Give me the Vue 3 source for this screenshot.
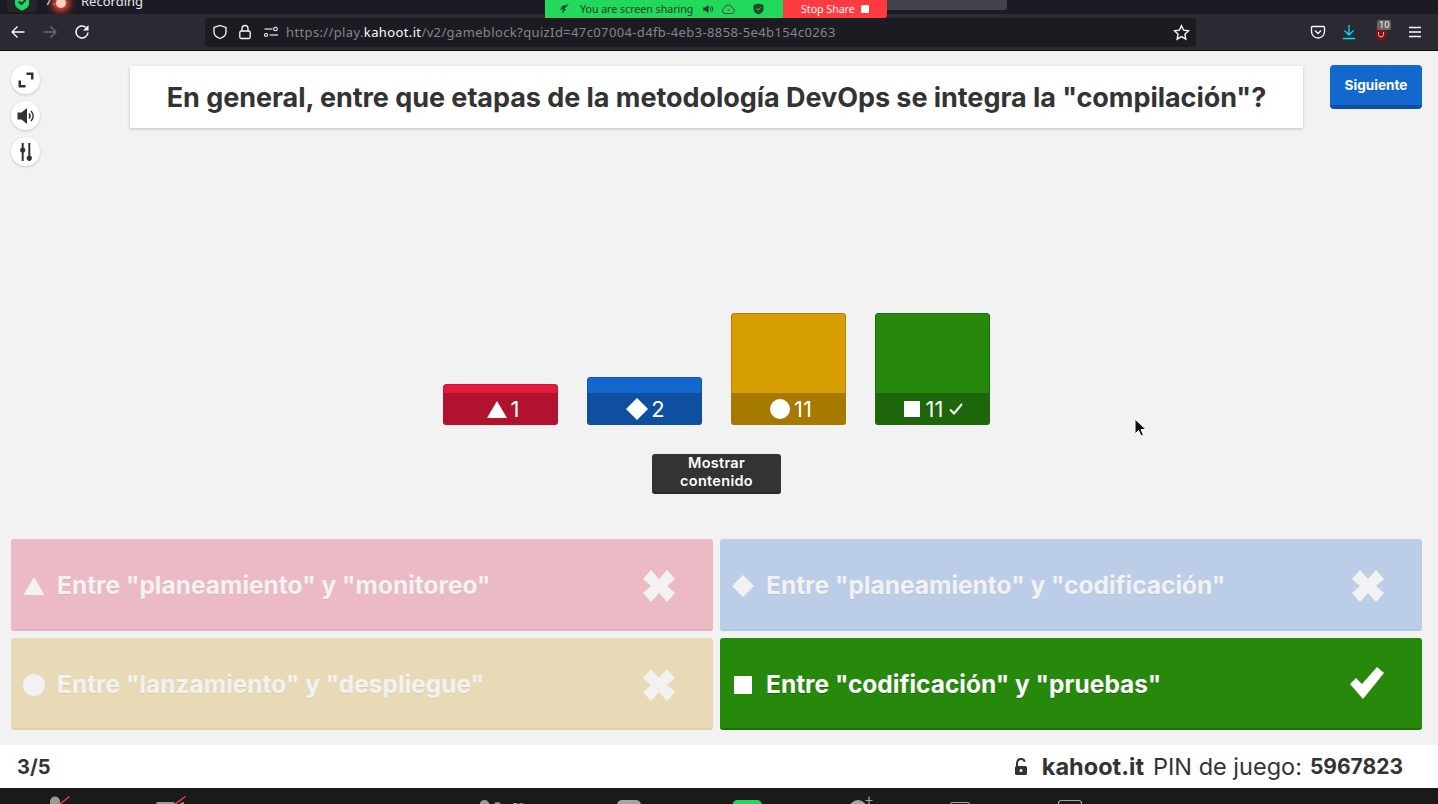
<template>
  <div class="screen">
    <div class="os-bar">
      <span class="os-badge">
        <svg width="16" height="14" viewBox="0 0 16 14"><path d="M8 -4l7 2.500v5c0 3.500-3 5.500-7 7-4-1.500-7-3.500-7-7v-5z" fill="#22d95c"/><path d="M4.800 1.500l2.600 2.600L11.500 0" fill="none" stroke="#123" stroke-width="1.800"/></svg>
      </span>
      <span class="os-num">7:</span>
      <span class="rec-dot"></span>
      <span class="rec-text">Recording</span>
    </div>

    <div class="toolbar">
      <div class="nav">
        <svg width="16" height="16" viewBox="0 0 16 16" class="ic"><path d="M14.500 8H2M7.500 2.500L2 8l5.500 5.500"/></svg>
        <svg width="16" height="16" viewBox="0 0 16 16" class="ic dim"><path d="M1.500 8H14M8.500 2.500L14 8l-5.500 5.500"/></svg>
        <svg width="16" height="16" viewBox="0 0 16 16" class="ic reload"><path d="M14 8.500a6 6 0 1 1-2.200-5.200"/><path d="M14.500 1v5.500H9z" fill="#fbfbfe" stroke="none"/></svg>
      </div>
      <div class="urlbar">
        <svg width="16" height="16" viewBox="0 0 16 16" class="ic"><path d="M8 1.500l6 2v4.500c0 3.500-3 5.500-6 6.500-3-1-6-3-6-6.500V3.500z"/></svg>
        <svg width="14" height="16" viewBox="0 0 14 16" class="ic lock-ic"><rect x="1.800" y="7" width="10.400" height="7.500" rx="1.500"/><path d="M4 7V4.500a3 3 0 0 1 6 0V7"/></svg>
        <svg width="16" height="16" viewBox="0 0 16 16" class="ic perm-ic"><path d="M1.500 5h8M1 11h0"/><circle cx="12.500" cy="5" r="1.800"/><circle cx="3" cy="11" r="1.500"/><path d="M6.500 11H15"/></svg>
        <span class="url"><span>https://play.</span><b>kahoot.it</b><span>/v2/gameblock?quizId=47c07004-d4fb-4eb3-8858-5e4b154c0263</span></span>
        <svg width="17" height="17" viewBox="0 0 16 16" class="ic star"><path d="M8 1.600l2 4.200 4.600.6-3.400 3.200.9 4.600L8 11.900l-4.100 2.300.9-4.600L1.400 6.400 6 5.800z"/></svg>
      </div>
      <div class="tools">
        <svg width="16" height="16" viewBox="0 0 16 16" class="ic"><path d="M2.500 2.500h11a1 1 0 0 1 1 1v4a6.500 6.500 0 0 1-13 0v-4a1 1 0 0 1 1-1z"/><path d="M5 6.500L8 9.500l3-3"/></svg>
        <svg width="16" height="16" viewBox="0 0 16 16" class="ic dl"><path d="M8 1v9.500M3.500 6.500L8 11l4.500-4.500M2 14.500h12"/></svg>
        <span class="ublock">
          <svg width="14" height="15" viewBox="0 0 14 15"><path d="M7 1l6 1.500v5c0 3.500-3 6-6 7-3-1-6-3.500-6-7v-5z" fill="#7c1414"/><path d="M4.500 6v2.500a2.500 2.500 0 0 0 5 0V6" fill="none" stroke="#e8b4b4"/></svg>
          <span class="ublock-count">10</span>
        </span>
        <svg width="16" height="16" viewBox="0 0 16 16" class="ic burger"><path d="M2 3.500h12M2 8h12M2 12.500h12"/></svg>
      </div>
    </div>

    <div class="share-pill">
      <div class="share-green">
        <svg width="12" height="12" viewBox="0 0 12 12"><path d="M11 1L4 3 2 7l3-1-1 5 4-5-2 0z" fill="#164a26"/></svg>
        <span class="share-text">You are screen sharing</span>
        <svg width="12" height="12" viewBox="0 0 12 12"><path d="M1 4.500h2L6.500 2v8L3 7.500H1z" fill="#2b3a2e"/><path d="M8 4c1 1 1 3 0 4M9.500 3c1.500 1.500 1.500 4.500 0 6" fill="none" stroke="#2b3a2e"/></svg>
        <svg class="share-cloud" width="15" height="12" viewBox="0 0 15 12"><path d="M4 10.500a2.800 2.800 0 0 1-.5-5.500 4 4 0 0 1 7.800 0 2.800 2.800 0 0 1-.3 5.500z" fill="none" stroke="#1f5a31"/><circle cx="7.500" cy="7" r="1" fill="#c33"/></svg>
        <svg class="share-shield" width="11" height="12" viewBox="0 0 11 12"><path d="M5.500.5l5 1.500v4c0 3-2.500 4.500-5 5.500-2.500-1-5-2.500-5-5.500V2z" fill="#1e4a2a"/><path d="M3.300 5.500L5 7.200l2.800-2.900" fill="none" stroke="#22d95c"/></svg>
      </div>
      <div class="share-red">
        <span>Stop Share</span>
        <i></i>
      </div>
    </div>
    <div class="ghost-tab"></div>

    <main class="page">
      <header class="top">
        <div class="side">
          <button class="round">
            <svg width="18" height="18" viewBox="0 0 18 18"><path d="M9.500 1.500h7v7H14V4H9.500zM8.500 16.500h-7v-7H4V14h4.500z" fill="#333"/></svg>
          </button>
          <button class="round">
            <svg width="20" height="18" viewBox="0 0 20 18"><path d="M1.500 5.500h4L11 1v16l-5.500-4.500h-4z" fill="#333"/><path d="M13 6.500c1.300 1.500 1.300 3.500 0 5M15 4c2.800 3 2.800 7 0 10" fill="none" stroke="#333" stroke-width="1.600"/></svg>
          </button>
          <button class="round">
            <svg width="18" height="20" viewBox="0 0 18 20"><path d="M5.700 1v18M12.300 1v18" stroke="#333" stroke-width="2"/><circle cx="5.700" cy="8" r="2.600" fill="#333"/><circle cx="12.300" cy="16" r="2.600" fill="#333"/></svg>
          </button>
        </div>
        <h1 class="question">En general, entre que etapas de la metodología DevOps se integra la "compilación"?</h1>
        <button class="next">Siguiente</button>
      </header>

      <section class="chart">
        <div v-for="b in bars" :key="b.cls" class="bar" :class="b.cls">
          <div class="bar-fill" :style="{ height: b.fill + 'px' }"></div>
          <div class="bar-label">
            <svg width="22" height="22" viewBox="0 0 22 22" class="shape-svg"><path :d="b.shape" fill="#fff"/></svg>
            <span>{{ b.value }}</span>
            <svg v-if="b.correct" width="16" height="14" viewBox="0 0 16 14" class="bar-check"><path d="M2 7.500l4 4 8-9.500" fill="none" stroke="#fff" stroke-width="2"/></svg>
          </div>
        </div>
      </section>

      <button class="show-btn">Mostrar<br>contenido</button>

      <section class="answers">
        <div v-for="a in answers" :key="a.cls" class="answer" :class="a.cls">
          <svg width="22" height="22" viewBox="0 0 22 22" class="answer-shape"><path :d="a.shape" /></svg>
          <span class="answer-text">{{ a.text }}</span>
          <svg v-if="a.correct" width="36" height="32" viewBox="0 0 36 32" class="mark check"><path d="M1 17l6-6 6 6L28 0l7 6-21 26z" fill="#fff"/></svg>
          <svg v-else width="34" height="34" viewBox="0 0 34 34" class="mark cross"><path d="M9 1l8 9 8-9 8 9-8 7 8 7-8 9-8-9-8 9-8-9 8-7-8-7z" /></svg>
        </div>
      </section>
    </main>

    <svg class="cursor" width="14" height="20" viewBox="0 0 14 20"><path d="M1 1v15l3.500-3.500L7 18l2.500-1-2.500-5.500h5z" fill="#111" stroke="#fff" stroke-width="1"/></svg>

    <footer class="foot">
      <span class="count">3/5</span>
      <div class="pin">
        <svg width="14" height="18" viewBox="0 0 14 18" class="pin-lock"><path d="M3 8V5a4 4 0 0 1 7.800-1.200" fill="none" stroke="#333" stroke-width="2"/><rect x="1" y="8" width="12" height="9" rx="1.500" fill="#333"/><circle cx="7" cy="12.500" r="1.500" fill="#fff"/></svg>
        <b class="site">kahoot.it</b>
        <span class="pin-label">PIN de juego:</span>
        <b class="pin-code">5967823</b>
      </div>
    </footer>

    <div class="zoom-bar">
      <svg width="1438" height="16" viewBox="0 0 1438 16">
        <rect x="50" y="8.500" width="10" height="20" rx="5" fill="#9a9a9a"/>
        <path d="M60 16L69.500 8.500" stroke="#e9414a" stroke-width="1.500"/>
        <rect x="156" y="14" width="19" height="14" rx="2" fill="#9a9a9a"/>
        <path d="M180 15l4-1v5z" fill="#9a9a9a"/>
        <path d="M175 16L185.500 8.500" stroke="#e9414a" stroke-width="1.500"/>
        <circle cx="484.500" cy="17" r="5" fill="#9a9a9a"/>
        <circle cx="497.500" cy="18" r="4" fill="#8c8c8c"/>
        <text x="512" y="23" class="zoom-num">53</text>
        <rect x="617" y="12" width="24" height="20" rx="5" fill="#a4a4a4"/>
        <rect x="732.500" y="12" width="29.500" height="20" rx="5" fill="#22d95c"/>
        <circle cx="858" cy="21" r="9" fill="#a4a4a4"/>
        <path d="M869 8.500v8M865.500 12.500h7" stroke="#a4a4a4" stroke-width="1.200"/>
        <rect x="950.500" y="14.500" width="19" height="14" rx="2" fill="none" stroke="#a4a4a4" stroke-width="1.200"/>
        <rect x="1058.500" y="12.500" width="23" height="18" rx="3" fill="none" stroke="#a4a4a4" stroke-width="1.200"/>
      </svg>
    </div>
  </div>
</template>

<script setup>
const TRIANGLE = 'M11 2L21.500 20H.5z'
const DIAMOND = 'M11 0L22 11 11 22 0 11z'
const CIRCLE = 'M11 0a11 11 0 1 0 0 22a11 11 0 1 0 0-22z'
const SQUARE = 'M2 2h18v18H2z'

const bars = [
  { cls: 'red', value: 1, fill: 9, shape: 'M11 3L21 20H1z' },
  { cls: 'blue', value: 2, fill: 16, shape: DIAMOND },
  { cls: 'yellow', value: 11, fill: 80, shape: 'M11 1a10 10 0 1 0 0 20a10 10 0 1 0 0-20z' },
  { cls: 'green', value: 11, fill: 80, shape: 'M3 3h16v16H3z', correct: true },
]

const answers = [
  { cls: 'a-red', text: 'Entre "planeamiento" y "monitoreo"', shape: TRIANGLE },
  { cls: 'a-blue', text: 'Entre "planeamiento" y "codificación"', shape: DIAMOND },
  { cls: 'a-yellow', text: 'Entre "lanzamiento" y "despliegue"', shape: CIRCLE },
  { cls: 'a-green', text: 'Entre "codificación" y "pruebas"', shape: SQUARE, correct: true },
]
</script>

<style>
html, body { margin: 0; background: #f2f2f2; overflow: hidden; }
</style>

<style scoped>
.screen {
  position: relative; width: 1438px; height: 804px; overflow: hidden;
  display: flex; flex-direction: column;
  font-family: Inter, "Noto Sans", sans-serif; color: #333;
}

.os-bar {
  height: 14px; flex: none; background: #1c1b24; overflow: hidden;
  display: flex; align-items: flex-end; color: #e6e6e6;
  font-family: "Noto Sans", sans-serif; font-size: 13px;
}
.os-badge {
  width: 30px; height: 12px; margin: 0 0 2px 7px; background: #24262b;
  border-radius: 0 0 4px 4px; display: flex; justify-content: center; overflow: hidden;
}
.os-num { margin: 0 0 7px 8px; line-height: 14px; width: 10px; }
.rec-dot {
  width: 10px; height: 10px; border-radius: 50%; background: #ffd0c4;
  box-shadow: 0 0 6px 4px #e8452f; margin: 0 0 6px 1px;
}
.rec-text { margin: 0 0 6px 15px; line-height: 14px; }

.toolbar {
  height: 36px; flex: none; background: #2b2a33; border-bottom: 1px solid #0c0c0d;
  display: flex; align-items: center;
}
.ic { fill: none; stroke: #fbfbfe; stroke-width: 1.300; flex: none; }
.ic.dim { stroke: #6e6d76; }
.ic.dl { stroke: #00ddff; margin-left: -2px; }
.ic.reload { stroke-width: 1.500; }
.nav { width: 205px; padding-left: 10px; display: flex; gap: 16px; box-sizing: border-box; }
.urlbar {
  width: 991px; height: 29px; background: #1c1b22; border-radius: 4px;
  display: flex; align-items: center; padding-left: 7px; box-sizing: border-box;
}
.lock-ic { margin-left: 10px; }
.perm-ic { margin-left: 11px; stroke-width: 1.100; }
.url {
  margin-left: 7px; flex: 1; white-space: nowrap; color: #85848c;
  font-family: "Noto Sans", sans-serif; font-size: 13px; letter-spacing: .37px;
}
.url b { font-weight: 400; color: #fbfbfe; }
.star { margin-right: 6px; }
.tools { flex: 1; display: flex; align-items: center; gap: 17px; padding-left: 114px; }
.ublock { position: relative; width: 14px; height: 15px; margin-left: 0; }
.ublock-count {
  position: absolute; left: 3px; top: -5px; padding: 0 2px; background: #666; color: #eee;
  border-radius: 2px; font: 9px/10px "Noto Sans", sans-serif;
}
.burger { margin-left: 2px; }

.share-pill {
  position: absolute; left: 545px; top: 0; width: 342px; height: 18px; display: flex;
  font-family: "Noto Sans", sans-serif; font-size: 10.600px; line-height: 18px;
}
.share-green {
  width: 238px; background: #22d95c; color: #173b22; display: flex; align-items: center;
  padding-left: 13px; box-sizing: border-box; gap: 9px;
}
.share-text { margin-left: 1px; }
.share-cloud { margin-left: -2px; }
.share-shield { margin-left: 8px; }
.share-red {
  flex: 1; background: #ff3b41; color: #fff; border-radius: 0 0 3px 0;
  display: flex; align-items: center; gap: 6px; padding-left: 18px;
}
.share-red i { width: 8px; height: 8px; background: #fff; border-radius: 1px; }
.ghost-tab {
  position: absolute; left: 887px; top: 0; width: 120px; height: 10px;
  background: #42414d; border-radius: 0 0 3px 0;
}

.page {
  flex: 1; background: #f2f2f2; padding: 0 16px 15px 11px;
  display: flex; flex-direction: column; align-items: center;
}
.top {
  align-self: stretch; height: 116px; flex: none; display: flex; align-items: flex-start;
}
.side { width: 29px; display: flex; flex-direction: column; gap: 7px; padding-top: 14px; flex: none; }
.round {
  width: 29px; height: 29px; border-radius: 50%; background: #fff; border: 0; padding: 0;
  box-shadow: 0 1px 3px rgba(0,0,0,.18); display: flex; align-items: center; justify-content: center;
}
.question {
  width: 1173px; height: 62px; margin: 15px 27px 0 90px; background: #fff; flex: none;
  box-shadow: 0 1px 3px rgba(0,0,0,.2); display: flex; align-items: center; justify-content: center;
  font-size: 27px; font-weight: 700; letter-spacing: -.05px; white-space: nowrap; color: #333;
}
.next {
  width: 92px; height: 44px; margin-top: 14px; flex: none; background: #1368ce; color: #fff;
  border: 0; border-bottom: 4px solid #0f4f9f; border-radius: 4px; padding: 0;
  font: 700 13.600px Inter, sans-serif;
}

.chart { height: 258px; flex: none; display: flex; align-items: flex-end; gap: 29px; }
.bar { width: 115px; border-radius: 3px; overflow: hidden; display: flex; flex-direction: column; }
.bar-fill { box-sizing: border-box; border: 1px solid transparent; border-bottom: 0; border-radius: 3px 3px 0 0; }
.bar-label {
  height: 32px; display: flex; align-items: center; justify-content: center; gap: 3px;
  color: #fff; font-size: 22px; font-weight: 400; padding-left: 4px; box-sizing: border-box;
}
.shape-svg { flex: none; }
.bar-check { margin-left: 2px; }
.red .bar-fill { background: #e21b3c; border-color: #c8183a; }
.red .bar-label { background: #b1132f; }
.blue .bar-fill { background: #1368ce; border-color: #1058b0; }
.blue .bar-label { background: #0f4f9f; padding-left: 2px; }
.yellow .bar-fill { background: #d69e00; border-color: #b47c0c; }
.yellow .bar-label { background: #a67a00; }
.green .bar-fill { background: #26890c; border-color: #1c6a09; }
.green .bar-label { background: #1d670a; padding-left: 0; }

.show-btn {
  width: 129px; height: 40px; margin-top: 29px; flex: none; padding: 0 0 2px; border: 0;
  border-radius: 3px; background: #333; color: #fff; border-bottom: 2px solid #282828;
  font: 600 14.500px/18px Inter, sans-serif; letter-spacing: .3px;
}

.answers {
  margin-top: 45px; align-self: stretch; display: grid;
  grid-template-columns: repeat(2, 1fr); grid-auto-rows: 92px; gap: 7px;
}
.answer {
  box-sizing: border-box; border-radius: 3px; padding: 0 37px 0 12px;
  display: flex; align-items: center; gap: 12px; border-bottom: 2px solid transparent;
  color: #f2f2f2; fill: #f2f2f2;
}
.answer-shape { flex: none; transform: translateY(2px); }
.answer-text {
  flex: 1; font-size: 24.500px; font-weight: 700; white-space: nowrap;
  text-shadow: 0 1px 0 rgba(0,0,0,.08); transform: translateY(1px);
}
.mark { flex: none; }
.cross { transform: translateY(2px); }
.a-red { background: #ecbac5; border-color: #e6b1bd; }
.a-blue { background: #bbcde7; border-color: #b2c5e1; }
.a-yellow { background: #e8dab6; border-color: #e2d2a9; }
.a-green { background: #26890c; border-color: #1f7009; color: #fff; fill: #fff; }
.a-green .answer-text { text-shadow: 0 1px 0 rgba(0,0,0,.25); }

.cursor { position: absolute; left: 1134px; top: 418px; }

.foot {
  height: 43px; flex: none; background: #fff; display: flex; align-items: center;
  justify-content: space-between; padding: 0 35px 0 17px; color: #333;
}
.count { font-weight: 700; font-size: 20px; }
.pin { display: flex; align-items: center; font-size: 23.500px; }
.pin-lock { margin-right: 14px; }
.site { font-weight: 700; margin-right: 9px; }
.pin-label { margin-right: 8px; }
.pin-code { font-size: 21px; }

.zoom-bar { height: 16px; flex: none; background: #1a1a1a; overflow: hidden; }
.zoom-bar svg { display: block; }
.zoom-num { fill: #9a9a9a; font-size: 11px; font-family: "Noto Sans", sans-serif; }
</style>
